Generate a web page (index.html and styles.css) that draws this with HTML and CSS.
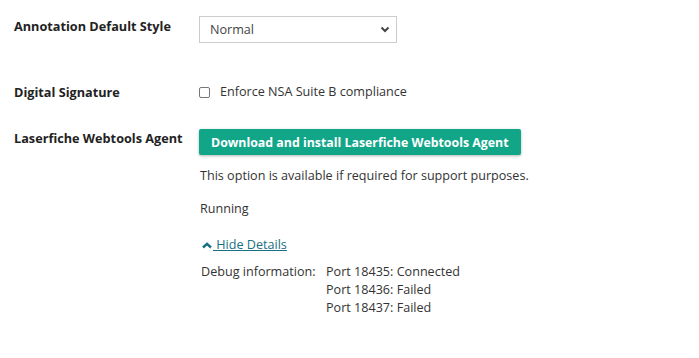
FILE: index.html
```html
<!DOCTYPE html>
<html>
  <head>
    <title>Settings</title>
    <link rel="stylesheet" href="styles.css">
  </head>
  <body>
    <div class="settings">
      <div class="row row-style">
        <div class="label">Annotation Default Style</div>
        <div class="value">
          <div class="select">
            <span>Normal</span>
            <svg class="caret" width="10" height="7" viewBox="0 0 10 7"><polyline points="1.5,1.5 5,5 8.5,1.5" fill="none" stroke="#444" stroke-width="2"/></svg>
          </div>
        </div>
      </div>
      <div class="row row-sign">
        <div class="label">Digital Signature</div>
        <div class="value">
          <label class="check"><span class="box"></span>Enforce NSA Suite B compliance</label>
        </div>
      </div>
      <div class="row row-agent">
        <div class="label">Laserfiche Webtools Agent</div>
        <div class="value">
          <button class="btn">Download and install Laserfiche Webtools Agent</button>
          <p class="note">This option is available if required for support purposes.</p>
          <p class="status">Running</p>
          <a class="toggle" href="#">
            <svg width="10" height="7" viewBox="0 0 10 7"><polyline points="1,5.5 5,1.8 9,5.5" fill="none" stroke="#1b6f84" stroke-width="2.4"/></svg><span class="toggle-text">&nbsp;Hide Details</span>
          </a>
          <div class="debug">
            <div class="debug-label">Debug information:</div>
            <div class="ports">
              <div>Port 18435: Connected</div>
              <div>Port 18436: Failed</div>
              <div>Port 18437: Failed</div>
            </div>
          </div>
        </div>
      </div>
    </div>
  </body>
</html>
```

FILE: styles.css
```css
body {
  margin: 0;
  background: #fff;
  font-family: "Open Sans", Arial, sans-serif;
  font-size: 12.6px;
  line-height: 18px;
  color: #333;
}

.settings {
  padding: 17px 0 0 14px;
}

.row {
  display: flex;
}
.label {
  width: 185px;
  flex-shrink: 0;
  font-size: 12.7px;
  font-weight: bold;
  color: #222;
}
.value {
  flex-grow: 1;
}

.row-sign {
  margin-top: 40px;
}
.row-agent {
  margin-top: 28px;
}

.select {
  margin-top: -1px;
  width: 198px;
  height: 27px;
  box-sizing: border-box;
  border: 1px solid #ccc;
  display: flex;
  align-items: center;
  justify-content: space-between;
  padding: 0 6px 0 10px;
  color: #444;
}

.check {
  display: flex;
  align-items: center;
  color: #333;
}
.check .box {
  width: 9px;
  height: 9px;
  border: 1px solid #777;
  border-radius: 2px;
  margin-right: 10px;
}

.btn {
  height: 26px;
  padding: 0 12px;
  border: none;
  border-radius: 2px;
  background: #12a689;
  color: #fff;
  font-family: "Open Sans", Arial, sans-serif;
  font-size: 12.35px;
  font-weight: bold;
  box-shadow: 0 1px 3px rgba(0, 0, 0, 0.3);
}

.note {
  margin: 12px 0 0 1px;
}
.status {
  margin: 15px 0 0 1px;
}

.toggle {
  display: flex;
  align-items: center;
  margin: 18px 0 0 3px;
  color: #1b6f84;
  text-decoration: none;
}
.toggle-text {
  text-decoration: underline;
  margin-left: 1px;
}

.debug {
  display: flex;
  margin: 9px 0 0 2px;
  color: #333;
}
.debug-label {
  width: 125px;
}
```
